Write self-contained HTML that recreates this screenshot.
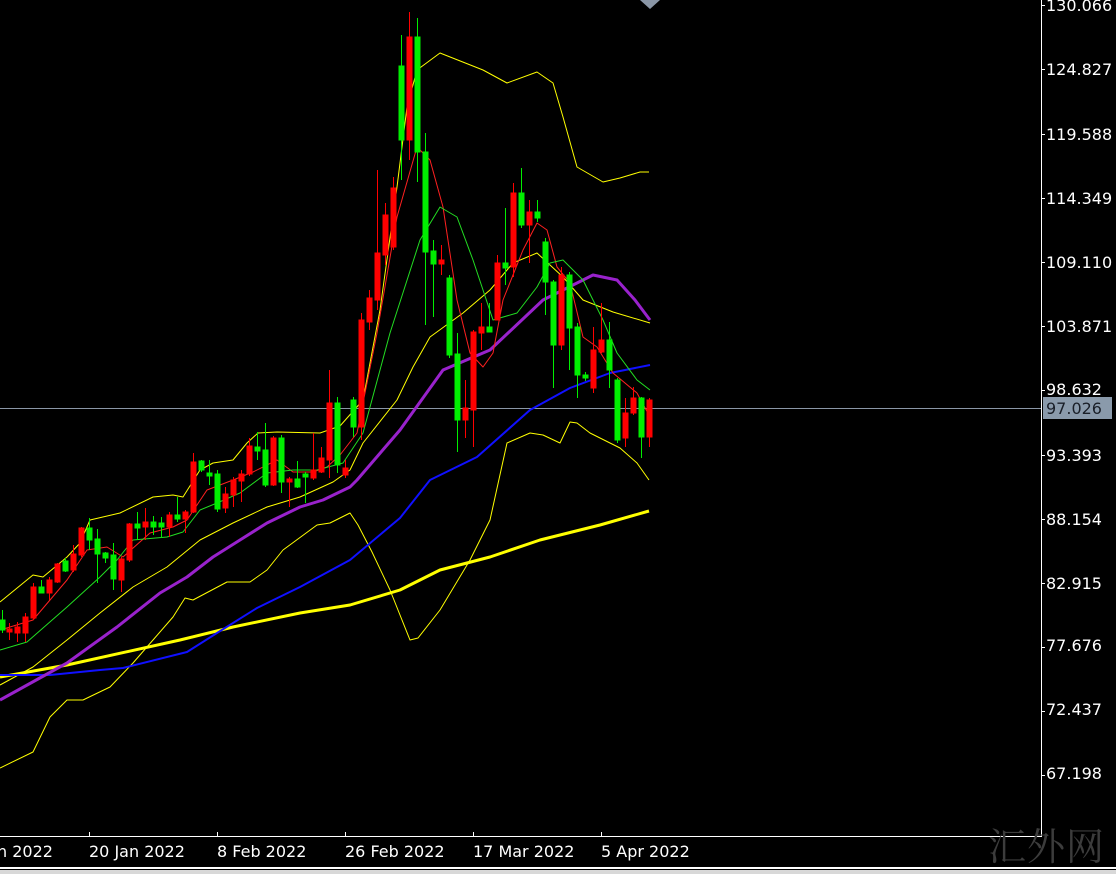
<!DOCTYPE html>
<html><head><meta charset="utf-8"><style>
html,body{margin:0;padding:0;background:#000;}
body{width:1116px;height:874px;overflow:hidden;position:relative;font-family:"DejaVu Sans","Liberation Sans",sans-serif;}
.pl{position:absolute;left:1046px;color:#fff;font-size:16px;line-height:17px;}
.dl{position:absolute;top:842px;color:#fff;font-size:16px;line-height:19px;white-space:nowrap;}
</style></head><body>
<svg width="1116" height="874" style="position:absolute;left:0;top:0">
<line x1="0" y1="408.5" x2="1041" y2="408.5" stroke="#8a96a6" stroke-width="1"/>
<g fill="none" stroke-linejoin="round">
<polyline stroke="#ffff00" stroke-width="1" points="0,602 33,575 43,577 67,557 80,543 90,520 120,513 153,497 173,495 183,497 200,470 213,463 233,460 247,443 258,433 277,432 320,433 340,426 363,400 380,310 397,187 407,107 417,70 440,53 483,70 507,83 537,72 553,83 563,117 577,167 603,182 620,178 640,172 649,172"/>
<polyline stroke="#ffff00" stroke-width="1" points="0,685 33,667 67,640 100,613 133,587 167,567 200,540 233,523 267,507 300,497 333,482 350,470 363,443 397,400 413,367 430,337 463,313 490,290 513,263 537,253 563,277 583,300 613,312 650,323"/>
<polyline stroke="#ffff00" stroke-width="1" points="0,768 33,752 50,717 67,700 83,700 110,687 133,663 153,640 173,617 185,598 193,600 227,582 250,582 267,570 283,550 317,525 330,523 350,513 358,525 372,552 390,590 410,640 418,638 440,610 470,560 490,520 507,443 530,433 543,435 560,443 570,422 577,423 590,433 620,448 637,463 649,480"/>
<polyline stroke="#ffff00" stroke-width="3" points="0,677 67,665 180,640 233,627 300,613 350,605 400,590 440,570 490,557 540,540 600,525 649,511"/>
<polyline stroke="#1010ff" stroke-width="2" points="0,675 50,675 100,670 123,668 187,652 217,633 257,608 300,587 350,560 400,518 430,480 477,457 530,410 570,388 610,373 650,365"/>
<polyline stroke="#9922cc" stroke-width="3" points="0,700 67,663 117,627 160,593 187,577 213,557 240,540 267,523 300,507 323,500 350,487 357,480 400,430 443,370 490,350 543,300 593,275 617,280 635,300 650,320"/>
<polyline stroke="#ff2020" stroke-width="1" points="0,630 33,620 67,580 87,550 107,547 123,557 150,533 173,527 187,520 207,490 233,480 253,472 277,460 293,472 313,472 327,467 340,455 357,433 377,333 397,217 417,147 430,160 443,207 457,300 470,353 483,367 493,353 503,300 523,250 537,223 547,230 557,267 570,283 583,337 597,347 613,373 637,393 650,417"/>
<polyline stroke="#22dd22" stroke-width="1" points="0,650 27,642 67,607 100,577 117,560 133,540 167,537 183,532 200,510 217,503 240,493 267,473 293,470 317,470 343,463 363,433 390,333 420,240 440,207 457,217 473,260 493,320 517,313 537,287 550,263 563,260 583,280 603,320 617,353 637,380 650,390"/>
</g>
<g stroke="#00ee00" fill="#00ee00" stroke-width="1">
<line x1="2.5" y1="610" x2="2.5" y2="633"/><rect x="0" y="620" width="5" height="10"/>
<line x1="41.5" y1="580" x2="41.5" y2="593"/><rect x="39" y="587" width="5" height="6"/>
<line x1="65.5" y1="558" x2="65.5" y2="572"/><rect x="63" y="561" width="5" height="10"/>
<line x1="89.5" y1="518" x2="89.5" y2="550"/><rect x="87" y="528" width="5" height="12"/>
<line x1="97.5" y1="529" x2="97.5" y2="583"/><rect x="95" y="539" width="5" height="15"/>
<line x1="105.5" y1="552" x2="105.5" y2="563"/><rect x="103" y="553" width="5" height="5"/>
<line x1="113.5" y1="543" x2="113.5" y2="590"/><rect x="111" y="555" width="5" height="24"/>
<line x1="137.5" y1="512" x2="137.5" y2="540"/><rect x="135" y="524" width="5" height="4"/>
<line x1="153.5" y1="516" x2="153.5" y2="535"/><rect x="151" y="522" width="5" height="5"/>
<line x1="161.5" y1="517" x2="161.5" y2="538"/><rect x="159" y="523" width="5" height="4"/>
<line x1="177.5" y1="497" x2="177.5" y2="522"/><rect x="175" y="515" width="5" height="4"/>
<line x1="201.5" y1="460" x2="201.5" y2="472"/><rect x="199" y="461" width="5" height="9"/>
<line x1="209.5" y1="460" x2="209.5" y2="485"/><rect x="207" y="473" width="5" height="3"/>
<line x1="217.5" y1="470" x2="217.5" y2="512"/><rect x="215" y="474" width="5" height="35"/>
<line x1="257.5" y1="432" x2="257.5" y2="460"/><rect x="255" y="447" width="5" height="4"/>
<line x1="265.5" y1="423" x2="265.5" y2="487"/><rect x="263" y="450" width="5" height="35"/>
<line x1="281.5" y1="435" x2="281.5" y2="493"/><rect x="279" y="438" width="5" height="44"/>
<line x1="297.5" y1="461" x2="297.5" y2="488"/><rect x="295" y="479" width="5" height="8"/>
<line x1="305.5" y1="472" x2="305.5" y2="503"/><rect x="303" y="474" width="5" height="3"/>
<line x1="337.5" y1="397" x2="337.5" y2="473"/><rect x="335" y="403" width="5" height="62"/>
<line x1="353.5" y1="397" x2="353.5" y2="437"/><rect x="351" y="400" width="5" height="27"/>
<line x1="401.5" y1="35" x2="401.5" y2="180"/><rect x="399" y="66" width="5" height="74"/>
<line x1="417.5" y1="18" x2="417.5" y2="182"/><rect x="415" y="37" width="5" height="115"/>
<line x1="425.5" y1="133" x2="425.5" y2="325"/><rect x="423" y="152" width="5" height="100"/>
<line x1="433.5" y1="240" x2="433.5" y2="317"/><rect x="431" y="251" width="5" height="13"/>
<line x1="449.5" y1="275" x2="449.5" y2="358"/><rect x="447" y="278" width="5" height="77"/>
<line x1="457.5" y1="333" x2="457.5" y2="452"/><rect x="455" y="354" width="5" height="66"/>
<line x1="489.5" y1="303" x2="489.5" y2="332"/><rect x="487" y="327" width="5" height="5"/>
<line x1="505.5" y1="208" x2="505.5" y2="285"/><rect x="503" y="263" width="5" height="5"/>
<line x1="521.5" y1="168" x2="521.5" y2="228"/><rect x="519" y="193" width="5" height="32"/>
<line x1="537.5" y1="200" x2="537.5" y2="222"/><rect x="535" y="212" width="5" height="6"/>
<line x1="545.5" y1="238" x2="545.5" y2="315"/><rect x="543" y="242" width="5" height="40"/>
<line x1="553.5" y1="280" x2="553.5" y2="388"/><rect x="551" y="282" width="5" height="63"/>
<line x1="569.5" y1="272" x2="569.5" y2="370"/><rect x="567" y="275" width="5" height="53"/>
<line x1="577.5" y1="323" x2="577.5" y2="398"/><rect x="575" y="327" width="5" height="48"/>
<line x1="585.5" y1="372" x2="585.5" y2="381"/><rect x="583" y="375" width="5" height="3"/>
<line x1="609.5" y1="322" x2="609.5" y2="388"/><rect x="607" y="340" width="5" height="30"/>
<line x1="617.5" y1="378" x2="617.5" y2="443"/><rect x="615" y="380" width="5" height="60"/>
<line x1="641.5" y1="397" x2="641.5" y2="458"/><rect x="639" y="398" width="5" height="39"/>
</g>
<g stroke="#ff0000" fill="#ff0000" stroke-width="1">
<line x1="9.5" y1="623" x2="9.5" y2="640"/><rect x="7" y="629" width="5" height="3"/>
<line x1="17.5" y1="622" x2="17.5" y2="642"/><rect x="15" y="627" width="5" height="6"/>
<line x1="25.5" y1="613" x2="25.5" y2="642"/><rect x="23" y="617" width="5" height="16"/>
<line x1="33.5" y1="583" x2="33.5" y2="620"/><rect x="31" y="587" width="5" height="31"/>
<line x1="49.5" y1="577" x2="49.5" y2="600"/><rect x="47" y="580" width="5" height="13"/>
<line x1="57.5" y1="563" x2="57.5" y2="583"/><rect x="55" y="564" width="5" height="18"/>
<line x1="73.5" y1="545" x2="73.5" y2="572"/><rect x="71" y="554" width="5" height="16"/>
<line x1="81.5" y1="527" x2="81.5" y2="557"/><rect x="79" y="528" width="5" height="27"/>
<line x1="121.5" y1="557" x2="121.5" y2="592"/><rect x="119" y="559" width="5" height="21"/>
<line x1="129.5" y1="523" x2="129.5" y2="562"/><rect x="127" y="524" width="5" height="36"/>
<line x1="145.5" y1="508" x2="145.5" y2="540"/><rect x="143" y="522" width="5" height="5"/>
<line x1="169.5" y1="512" x2="169.5" y2="537"/><rect x="167" y="515" width="5" height="12"/>
<line x1="185.5" y1="510" x2="185.5" y2="533"/><rect x="183" y="512" width="5" height="7"/>
<line x1="193.5" y1="453" x2="193.5" y2="513"/><rect x="191" y="462" width="5" height="50"/>
<line x1="225.5" y1="487" x2="225.5" y2="513"/><rect x="223" y="494" width="5" height="14"/>
<line x1="233.5" y1="477" x2="233.5" y2="507"/><rect x="231" y="480" width="5" height="15"/>
<line x1="241.5" y1="470" x2="241.5" y2="502"/><rect x="239" y="474" width="5" height="7"/>
<line x1="249.5" y1="438" x2="249.5" y2="476"/><rect x="247" y="446" width="5" height="28"/>
<line x1="273.5" y1="436" x2="273.5" y2="486"/><rect x="271" y="438" width="5" height="47"/>
<line x1="289.5" y1="477" x2="289.5" y2="507"/><rect x="287" y="479" width="5" height="3"/>
<line x1="313.5" y1="433" x2="313.5" y2="480"/><rect x="311" y="470" width="5" height="8"/>
<line x1="321.5" y1="447" x2="321.5" y2="473"/><rect x="319" y="458" width="5" height="14"/>
<line x1="329.5" y1="370" x2="329.5" y2="478"/><rect x="327" y="403" width="5" height="57"/>
<line x1="345.5" y1="460" x2="345.5" y2="478"/><rect x="343" y="468" width="5" height="7"/>
<line x1="361.5" y1="313" x2="361.5" y2="440"/><rect x="359" y="320" width="5" height="107"/>
<line x1="369.5" y1="290" x2="369.5" y2="330"/><rect x="367" y="298" width="5" height="24"/>
<line x1="377.5" y1="170" x2="377.5" y2="310"/><rect x="375" y="253" width="5" height="47"/>
<line x1="385.5" y1="203" x2="385.5" y2="265"/><rect x="383" y="215" width="5" height="40"/>
<line x1="393.5" y1="177" x2="393.5" y2="250"/><rect x="391" y="188" width="5" height="59"/>
<line x1="409.5" y1="12" x2="409.5" y2="160"/><rect x="407" y="37" width="5" height="103"/>
<line x1="441.5" y1="245" x2="441.5" y2="275"/><rect x="439" y="260" width="5" height="4"/>
<line x1="465.5" y1="380" x2="465.5" y2="438"/><rect x="463" y="408" width="5" height="12"/>
<line x1="473.5" y1="330" x2="473.5" y2="447"/><rect x="471" y="332" width="5" height="78"/>
<line x1="481.5" y1="303" x2="481.5" y2="350"/><rect x="479" y="327" width="5" height="6"/>
<line x1="497.5" y1="255" x2="497.5" y2="320"/><rect x="495" y="263" width="5" height="57"/>
<line x1="513.5" y1="183" x2="513.5" y2="277"/><rect x="511" y="193" width="5" height="74"/>
<line x1="529.5" y1="200" x2="529.5" y2="263"/><rect x="527" y="212" width="5" height="13"/>
<line x1="561.5" y1="267" x2="561.5" y2="350"/><rect x="559" y="275" width="5" height="70"/>
<line x1="593.5" y1="327" x2="593.5" y2="393"/><rect x="591" y="350" width="5" height="38"/>
<line x1="601.5" y1="303" x2="601.5" y2="353"/><rect x="599" y="340" width="5" height="12"/>
<line x1="625.5" y1="398" x2="625.5" y2="447"/><rect x="623" y="413" width="5" height="25"/>
<line x1="633.5" y1="387" x2="633.5" y2="415"/><rect x="631" y="398" width="5" height="15"/>
<line x1="649.5" y1="398" x2="649.5" y2="447"/><rect x="647" y="400" width="5" height="37"/>
</g>
<polygon points="640,0 660,0 650,9" fill="#8a96a6"/>
<line x1="1041.5" y1="0" x2="1041.5" y2="836" stroke="#fff" stroke-width="1"/>
<line x1="0" y1="836.5" x2="1042" y2="836.5" stroke="#fff" stroke-width="1"/>
<g stroke="#fff" stroke-width="1">
<line x1="1041" y1="5.5" x2="1045" y2="5.5"/><line x1="1041" y1="69.5" x2="1045" y2="69.5"/><line x1="1041" y1="134.5" x2="1045" y2="134.5"/><line x1="1041" y1="198.5" x2="1045" y2="198.5"/><line x1="1041" y1="262.5" x2="1045" y2="262.5"/><line x1="1041" y1="326.5" x2="1045" y2="326.5"/><line x1="1041" y1="390.5" x2="1045" y2="390.5"/><line x1="1041" y1="455.5" x2="1045" y2="455.5"/><line x1="1041" y1="519.5" x2="1045" y2="519.5"/><line x1="1041" y1="583.5" x2="1045" y2="583.5"/><line x1="1041" y1="647.5" x2="1045" y2="647.5"/><line x1="1041" y1="711.5" x2="1045" y2="711.5"/><line x1="1041" y1="775.5" x2="1045" y2="775.5"/>
<line x1="89.5" y1="832" x2="89.5" y2="836"/><line x1="217.5" y1="832" x2="217.5" y2="836"/><line x1="345.5" y1="832" x2="345.5" y2="836"/><line x1="473.5" y1="832" x2="473.5" y2="836"/><line x1="601.5" y1="832" x2="601.5" y2="836"/>
</g>
<rect x="1043" y="397" width="69" height="22" fill="#8a9aab"/>
<line x1="0" y1="868" x2="1116" y2="868" stroke="#fff" stroke-width="2"/>
<rect x="0" y="870" width="1116" height="4" fill="#d8d8d8"/>
</svg>
<div class="pl" style="top:-3px">130.066</div>
<div class="pl" style="top:61px">124.827</div>
<div class="pl" style="top:126px">119.588</div>
<div class="pl" style="top:190px">114.349</div>
<div class="pl" style="top:254px">109.110</div>
<div class="pl" style="top:318px">103.871</div>
<div class="pl" style="top:381px">98.632</div>
<div class="pl" style="top:400px;color:#1a1f28">97.026</div>
<div class="pl" style="top:447px">93.393</div>
<div class="pl" style="top:511px">88.154</div>
<div class="pl" style="top:575px">82.915</div>
<div class="pl" style="top:637px">77.676</div>
<div class="pl" style="top:701px">72.437</div>
<div class="pl" style="top:765px">67.198</div>
<div class="dl" style="left:-3px">n 2022</div>
<div class="dl" style="left:89px">20 Jan 2022</div>
<div class="dl" style="left:217px">8 Feb 2022</div>
<div class="dl" style="left:345px">26 Feb 2022</div>
<div class="dl" style="left:473px">17 Mar 2022</div>
<div class="dl" style="left:601px">5 Apr 2022</div>
<div style="position:absolute;left:988px;top:822px;font-family:'Noto Serif CJK SC','Liberation Serif',serif;font-size:38px;color:#3c3c3c;letter-spacing:1px;line-height:44px">汇外网</div>
</body></html>
